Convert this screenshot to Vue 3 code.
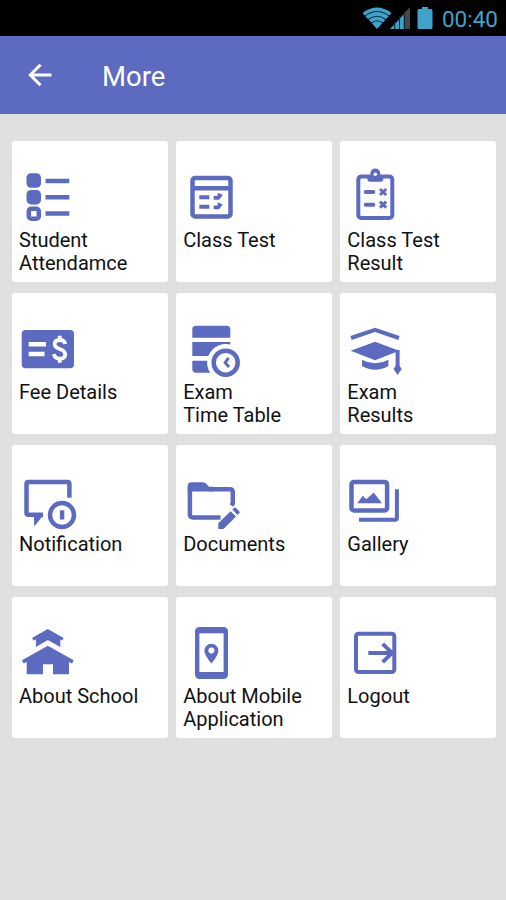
<template>
  <div class="screen">

    <div class="status-bar">
      <svg class="wifi" viewBox="0 0 30 22">
        <path class="cyan" d="M15 22 L0.5 6 Q15 -5 29.5 6 Z" />
        <path class="arc" d="M2.5 9.2 Q15 -0.2 27.5 9.2" />
        <path class="arc" d="M5.8 12.8 Q15 5.6 24.2 12.8" />
        <path class="arc" d="M9 16.2 Q15 11.4 21 16.2" />
      </svg>
      <svg class="signal" viewBox="0 0 20 22">
        <path class="cyan" d="M0 22 L14 7 V22 Z" />
        <path class="off" d="M14.5 6 L20 0 V22 H14.5 Z" />
        <path class="arc" d="M4.8 14 V22 M9.5 9 V22 M14.3 4 V22" />
      </svg>
      <svg class="battery" viewBox="0 0 16 22">
        <path class="cyan" d="M5 0 H11 V2 H14 Q15.5 2 15.5 3.5 V20.5 Q15.5 22 14 22 H2 Q0.5 22 0.5 20.5 V3.5 Q0.5 2 2 2 H5 Z" />
      </svg>
      <span class="clock">00:40</span>
    </div>

    <header class="app-bar">
      <svg class="back" viewBox="0 0 24 24">
        <path d="M23.5 12 H2.5 M12.5 1.8 L2.3 12 L12.5 22.2" />
      </svg>
      <h1>More</h1>
    </header>

    <main class="grid">
      <div v-for="item in items" :key="item.icon" class="card">
        <svg class="icon" viewBox="0 0 60 60">
          <g v-if="item.icon === 'attendance'">
            <rect class="fill" x="7.5" y="7.3" width="14.5" height="14.5" rx="4.5" />
            <rect class="fill" x="7.5" y="23.9" width="14.5" height="14.5" rx="4.5" />
            <rect class="line" x="9.8" y="42.7" width="10" height="10" rx="2.5" />
            <path class="line" d="M26.5 15 H50.3 M26.5 31.3 H50.3 M26.5 47.5 H50.3" />
          </g>
          <g v-else-if="item.icon === 'test'">
            <rect class="line" x="9.5" y="12" width="38" height="38.5" rx="2.5" />
            <path class="line" d="M9.5 22.2 H47.5" />
            <path class="line thin" d="M16.3 31.2 H26.3 M16.3 40.7 H26.3" />
            <path class="fill" d="M30.7 30 H34.5 L34.8 26.8 L39.8 29 L36 33.8 H30.7 Z M30.7 39.5 H34.5 L34.8 36.3 L39.8 38.5 L36 43.3 H30.7 Z" />
          </g>
          <g v-else-if="item.icon === 'result'">
            <rect class="line thin" x="11.3" y="10.5" width="34" height="41.5" rx="3" />
            <path class="fill" d="M20.3 9 H24 A4.7 4.7 0 0 1 32.6 9 H36.3 V12.7 Q36.3 15.7 33.3 15.7 H23.3 Q20.3 15.7 20.3 12.7 Z" />
            <circle class="fill" cx="28.3" cy="7.6" r="5" />
            <circle class="white" cx="28.3" cy="8.2" r="1.8" />
            <path class="line round" d="M18.8 26 H26.3 M18.8 38.7 H26.3" />
            <path class="line cross" d="M33 23 L39.2 29 M39.2 23 L33 29 M33 35.7 L39.2 41.7 M39.2 35.7 L33 41.7" />
          </g>
          <g v-else-if="item.icon === 'fee'">
            <rect class="fill" x="2.7" y="12" width="52.3" height="38.3" rx="4" />
            <path class="line light" d="M9.7 26.3 H27 M9.7 36 H25.5" />
            <path class="line light dollar" d="M46.2 26 Q45.4 22 40.7 22 Q35.6 22 35.6 26.1 Q35.6 29.3 40.7 31 Q46.2 32.8 46.2 36.4 Q46.2 40.6 40.7 40.6 Q35.6 40.6 35 36 M40.7 17.7 V22 M40.7 40.6 V44.7" />
          </g>
          <g v-else-if="item.icon === 'timetable'">
            <path class="fill" d="M13 7.7 H43.6 Q47.3 7.7 47.3 11.4 V19.7 H9.3 V11.4 Q9.3 7.7 13 7.7 Z" />
            <path class="fill" d="M9.3 24 H47.3 V38 H9.3 Z M9.3 42.7 H30 V54.7 H13 Q9.3 54.7 9.3 51 Z" />
            <circle class="white" cx="42.7" cy="44.7" r="18.6" />
            <circle class="line" cx="42.7" cy="44.7" r="12" />
            <path class="line cross" d="M45.5 39.8 L42.2 44.7 L46 49" />
          </g>
          <g v-else-if="item.icon === 'exam'">
            <path class="line thin" d="M4 20 L28 11.9 L52 20" />
            <path class="fill" d="M3.7 32.7 L28 23.7 L52.3 32.7 L28 42.3 Z" />
            <path class="fill" d="M15 41.7 Q28 49 41.4 41.7 V48 Q28 55.5 15 48 Z" />
            <path class="line thin" d="M50.6 32 V49" />
            <path class="fill" d="M50.6 45 L54.7 51 L50.6 57 L46.5 51 Z" />
          </g>
          <g v-else-if="item.icon === 'notification'">
            <path class="line" d="M50.4 27.7 V14 Q50.4 12 48.4 12 H9.5 Q7.5 12 7.5 14 V42.8 Q7.5 44.8 9.5 44.8 H24" />
            <path class="fill" d="M14.8 45 H24.5 L15.3 56.5 Z" />
            <circle class="line" cx="43" cy="45" r="12" />
            <rect class="fill" x="40.9" y="40.3" width="4.4" height="9.2" />
          </g>
          <g v-else-if="item.icon === 'documents'">
            <path class="fill" d="M4.7 16 Q4.7 12.3 8.4 12.3 H20 Q22 12.3 23.3 13.8 L26 16.8 H30 V21.5 H4.7 Z" />
            <path class="line" d="M26 19.2 H46.8 Q49.8 19.2 49.8 22.2 V33.5 L48.5 35.5 M37.5 47.5 H9.9 Q6.9 47.5 6.9 44.5 V17" />
            <path class="fill" d="M35.3 53.3 L47.6 41.2 L53 46.6 L40.5 59 H35.3 Z M49.3 39.6 L51 38 Q52 37.1 53 38 L56.2 41.3 Q57.2 42.3 56.2 43.3 L54.6 45 Z" />
          </g>
          <g v-else-if="item.icon === 'gallery'">
            <rect class="line" x="4.5" y="11.9" width="35.6" height="28.6" rx="2.5" />
            <path class="fill" d="M10.3 33.3 L15.7 25.7 L19.4 29.3 L26.7 22.5 L35 33.3 Z" />
            <path class="line thin" d="M49.9 19.2 V47.8 Q49.9 49.8 47.9 49.8 H12" />
          </g>
          <g v-else-if="item.icon === 'school'">
            <path class="fill" d="M28.8 7 L44.7 16 L43 18.5 L41.3 17.6 V25 L28.8 18 L17 25 V17.6 L14.7 18.5 L13 16 Z" />
            <path class="fill" d="M28.8 23.7 L54.7 38.2 L53 41.5 L50 40 V52.3 H34 V42.3 H24 V52.3 H7.7 V40 L4.7 41.5 L3 38.2 Z" />
          </g>
          <g v-else-if="item.icon === 'mobile'">
            <rect class="fill" x="12" y="5" width="33" height="52" rx="4.5" />
            <rect class="white" x="16.4" y="11.3" width="24.2" height="38.7" />
            <path class="fill" d="M28.4 21.7 A7 7 0 0 1 35.4 28.7 Q35.4 33 28.4 41.5 Q21.4 33 21.4 28.7 A7 7 0 0 1 28.4 21.7 Z" />
            <circle class="white" cx="28.4" cy="28.6" r="3" />
          </g>
          <g v-else>
            <rect class="line thin" x="9" y="11.7" width="38.3" height="38.3" rx="2.5" />
            <path class="line thin" d="M21.3 31 H46 M35.7 21.9 L45 31 L35.7 40.1" />
          </g>
        </svg>
        <div class="label">
          <div v-for="line in item.label" :key="line">{{ line }}</div>
        </div>
      </div>
    </main>

  </div>
</template>

<script setup>
const items = [
  { icon: "attendance", label: ["Student", "Attendamce"] },
  { icon: "test", label: ["Class Test"] },
  { icon: "result", label: ["Class Test", "Result"] },
  { icon: "fee", label: ["Fee Details"] },
  { icon: "timetable", label: ["Exam", "Time Table"] },
  { icon: "exam", label: ["Exam", "Results"] },
  { icon: "notification", label: ["Notification"] },
  { icon: "documents", label: ["Documents"] },
  { icon: "gallery", label: ["Gallery"] },
  { icon: "school", label: ["About School"] },
  { icon: "mobile", label: ["About Mobile", "Application"] },
  { icon: "logout", label: ["Logout"] },
];
</script>

<style>
body {
  margin: 0;
  background: #e0e0e0;
}
</style>

<style scoped>
.screen {
  min-height: 900px;
  background: #e0e0e0;
  font-family: Roboto, "Liberation Sans", sans-serif;
}

.status-bar {
  display: flex;
  align-items: center;
  justify-content: flex-end;
  height: 36px;
  padding-right: 8px;
  box-sizing: border-box;
  background: #000;
}

.wifi {
  width: 30px;
  height: 22px;
  margin-right: -2px;
}

.signal {
  width: 20px;
  height: 22px;
  margin-right: 7px;
}

.battery {
  width: 16px;
  height: 22px;
  margin-right: 9px;
}

.cyan {
  fill: #3fa3cb;
}

.off {
  fill: #484848;
}

.arc {
  fill: none;
  stroke: #0b2733;
  stroke-width: 1.1;
}

.clock {
  padding-top: 3px;
  font-size: 22.5px;
  line-height: 33px;
  color: #3fa3cb;
}

.app-bar {
  display: flex;
  align-items: center;
  height: 78px;
  padding-left: 28px;
  box-sizing: border-box;
  background: #5c6bc0;
}

.back {
  width: 24px;
  height: 24px;
  margin-right: 50px;
  fill: none;
  stroke: #fff;
  stroke-width: 3;
}

h1 {
  margin: 3px 0 0;
  font-size: 27.5px;
  font-weight: 400;
  color: #fff;
}

.grid {
  display: grid;
  grid-template-columns: repeat(3, 1fr);
  grid-auto-rows: 141px;
  gap: 11px 8px;
  padding: 27px 10px 0 11.5px;
}

.card {
  padding: 25px 0 0 7px;
  box-sizing: border-box;
  background: #fff;
  border-radius: 3px;
}

.icon {
  display: block;
  width: 60px;
  height: 60px;
}

.fill {
  fill: #5c6bc0;
}

.white {
  fill: #fff;
}

.line {
  fill: none;
  stroke: #5c6bc0;
  stroke-width: 4.5;
}

.thin {
  stroke-width: 4;
}

.cross {
  stroke-width: 3;
}

.round {
  stroke-width: 4;
  stroke-linecap: round;
}

.light {
  stroke: #fff;
}

.dollar {
  stroke-width: 3.8;
}

.label {
  padding: 3px 0 0 0.5px;
  font-size: 20px;
  line-height: 23px;
  color: #111;
  white-space: nowrap;
}
</style>
